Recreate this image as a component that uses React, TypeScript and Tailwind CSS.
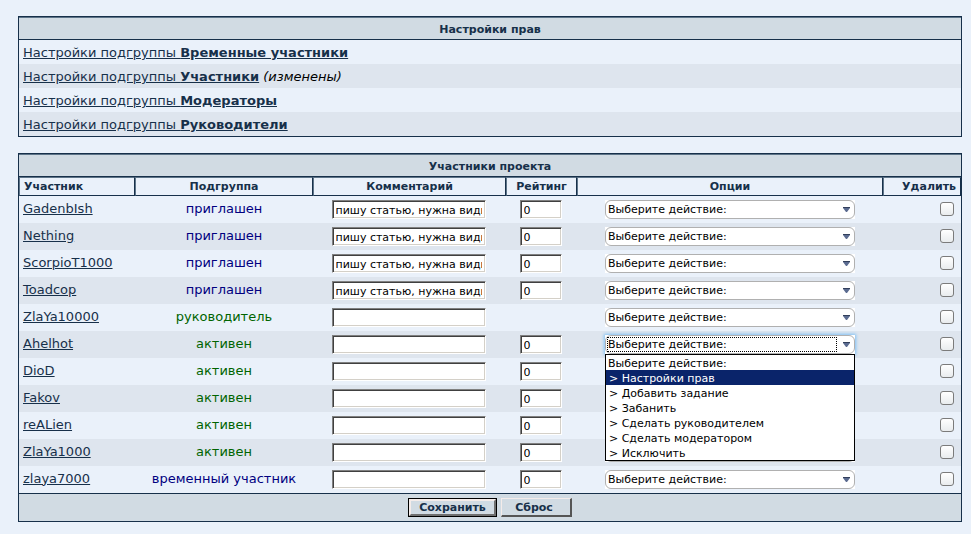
import { useState } from 'react';

interface Member {
  name: string;
  group: string;
  tone: 'blue' | 'green';
  comment: string;
  rating: string | null;
}

const INVITE = 'пишу статью, нужна видимость';

const MEMBERS: Member[] = [
  { name: 'GadenbIsh', group: 'приглашен', tone: 'blue', comment: INVITE, rating: '0' },
  { name: 'Nething', group: 'приглашен', tone: 'blue', comment: INVITE, rating: '0' },
  { name: 'ScorpioT1000', group: 'приглашен', tone: 'blue', comment: INVITE, rating: '0' },
  { name: 'Toadcop', group: 'приглашен', tone: 'blue', comment: INVITE, rating: '0' },
  { name: 'ZlaYa10000', group: 'руководитель', tone: 'green', comment: '', rating: null },
  { name: 'Ahelhot', group: 'активен', tone: 'green', comment: '', rating: '0' },
  { name: 'DioD', group: 'активен', tone: 'green', comment: '', rating: '0' },
  { name: 'Fakov', group: 'активен', tone: 'green', comment: '', rating: '0' },
  { name: 'reALien', group: 'активен', tone: 'green', comment: '', rating: '0' },
  { name: 'ZlaYa1000', group: 'активен', tone: 'green', comment: '', rating: '0' },
  { name: 'zlaya7000', group: 'временный участник', tone: 'blue', comment: '', rating: '0' },
];

const SUBGROUPS = [
  { name: 'Временные участники', changed: false },
  { name: 'Участники', changed: true },
  { name: 'Модераторы', changed: false },
  { name: 'Руководители', changed: false },
];

const ACTIONS = [
  'Выберите действие:',
  '> Настройки прав',
  '> Добавить задание',
  '> Забанить',
  '> Сделать руководителем',
  '> Сделать модератором',
  '> Исключить',
];

const inputClass =
  'mx-auto block h-[19px] border border-t-[#808080] border-l-[#808080] border-r-white border-b-white bg-white pt-0.5 px-[3px] text-[11px] leading-3 text-black shadow-[inset_1px_1px_#404040,inset_-1px_-1px_#d4d0c8] outline-none';

const titleClass =
  'h-[23px] border-t border-b border-t-[#5d7488] border-b-[#17304a] bg-[#d1dbe3] p-0 pt-0.5 text-[11px] leading-4 font-bold';

const headClass =
  'h-[19px] border border-t-[#5d7488] border-l-[#5d7488] border-r-[#17304a] border-b-[#17304a] p-0 px-1 pt-px text-[11px] leading-4 font-bold';

function ActionSelect({ member, open, onToggle, onClose }: {
  member: string;
  open: boolean;
  onToggle: () => void;
  onClose: () => void;
}) {
  const [action, setAction] = useState(0);
  const [hovered, setHovered] = useState(1);

  const pick = (index: number) => {
    setAction(index);
    onClose();
  };

  return (
    <div className={`relative mx-auto h-[19px] w-[250px] bg-white ${open ? 'shadow-[0_0_3px_1px_#7fc1f5]' : ''}`}>
      <select
        aria-label={`Действие: ${member}`}
        value={action}
        onChange={(e) => setAction(Number(e.target.value))}
        onMouseDown={(e) => {
          e.preventDefault();
          onToggle();
        }}
        className="block h-[19px] w-full appearance-none rounded-md border border-[#b0b0b0] bg-white pt-px pl-0.5 pr-5 text-[11px] leading-4 text-black outline-none"
      >
        {ACTIONS.map((label, i) => (
          <option key={label} value={i}>{label}</option>
        ))}
      </select>
      <svg className="pointer-events-none absolute top-[7px] right-[5px] h-[5px] w-[7px]" viewBox="0 0 7 5">
        <path d="M0 0h7v1L4 5H3L0 1z" fill="#5a6b90" />
        <path d="M0 0h7v1H0z" fill="#33405c" />
      </svg>
      {open && (
        <>
          <div className="pointer-events-none absolute inset-y-0.5 left-0.5 right-[18px] border border-dotted border-black" />
          <ul role="listbox" className="absolute top-[19px] left-0 z-10 w-full border border-black bg-white text-left text-[11px] leading-[15px] text-black">
            {ACTIONS.map((label, i) => (
              <li
                key={label}
                role="option"
                aria-selected={i === hovered}
                onMouseEnter={() => setHovered(i)}
                onClick={() => pick(i)}
                className={`h-[15px] pt-px ${i === 0 ? 'pl-0.5' : 'pl-[3px]'} ${i === hovered ? 'bg-[#0a246a] text-white' : ''}`}
              >
                {label}
              </li>
            ))}
          </ul>
        </>
      )}
    </div>
  );
}

function RightsTable() {
  return (
    <table className="w-full border-separate border-spacing-0 border border-[#17304a]">
      <thead>
        <tr>
          <th className={titleClass}>Настройки прав</th>
        </tr>
      </thead>
      <tbody>
        {SUBGROUPS.map((group) => (
          <tr key={group.name} className="even:bg-[#dee5ee]">
            <td className="h-6 p-0 px-1 pt-0.5">
              <a href="#" className="underline">
                Настройки подгруппы <b>{group.name}</b>
              </a>
              {group.changed && <i className="text-black"> (изменены)</i>}
            </td>
          </tr>
        ))}
      </tbody>
    </table>
  );
}

function MembersTable() {
  const [openRow, setOpenRow] = useState<string | null>('Ahelhot');

  return (
    <table className="w-full table-fixed border-separate border-spacing-0 border border-[#17304a]">
      <colgroup>
        <col className="w-[116px]" />
        <col className="w-[178px]" />
        <col className="w-[193px]" />
        <col className="w-[71px]" />
        <col />
        <col className="w-[78px]" />
      </colgroup>
      <thead>
        <tr>
          <th colSpan={6} className={titleClass}>Участники проекта</th>
        </tr>
        <tr>
          <th className={`${headClass} text-left`}>Участник</th>
          <th className={headClass}>Подгруппа</th>
          <th className={headClass}>Комментарий</th>
          <th className={headClass}>Рейтинг</th>
          <th className={headClass}>Опции</th>
          <th className={`${headClass} text-right`}>Удалить</th>
        </tr>
      </thead>
      <tbody>
        {MEMBERS.map((m) => (
          <tr key={m.name} className="even:bg-[#dee5ee]">
            <td className="h-[27px] p-0 pb-0.5 pl-1">
              <a href="#" className="underline">{m.name}</a>
            </td>
            <td className={`p-0 pb-0.5 text-center ${m.tone === 'blue' ? 'text-[#000080]' : 'text-[#006400]'}`}>
              {m.group}
            </td>
            <td className="p-0 pr-0.5">
              <input
                type="text"
                aria-label={`Комментарий: ${m.name}`}
                defaultValue={m.comment}
                className={`${inputClass} w-[154px]`}
              />
            </td>
            <td className="p-0 pr-0.5">
              {m.rating !== null && (
                <input
                  type="text"
                  aria-label={`Рейтинг: ${m.name}`}
                  defaultValue={m.rating}
                  className={`${inputClass} w-[42px]`}
                />
              )}
            </td>
            <td className="p-0">
              <ActionSelect
                member={m.name}
                open={openRow === m.name}
                onToggle={() => setOpenRow(openRow === m.name ? null : m.name)}
                onClose={() => setOpenRow(null)}
              />
            </td>
            <td className="p-0 pr-[7px] pb-0.5">
              <input
                type="checkbox"
                aria-label={`Удалить: ${m.name}`}
                className="ml-auto block size-[14px] appearance-none rounded-[3px] border border-[#7b7b7b] bg-linear-to-b from-white to-[#e9ecee] checked:from-[#4d5f82] checked:to-[#4d5f82]"
              />
            </td>
          </tr>
        ))}
      </tbody>
      <tfoot>
        <tr>
          <td colSpan={6} className="h-7 border-t border-[#17304a] bg-[#d1dbe3] p-0">
            <div className="flex items-center justify-center gap-1">
              <div className="border border-black">
                <button type="submit" className="block h-[17px] w-[87px] border-2 border-t-[#f4ecea] border-l-[#f4ecea] border-r-[#707070] border-b-[#707070] bg-[#d1dbe3] pt-px text-[11px] leading-3 font-bold">
                  Сохранить
                </button>
              </div>
              <button type="reset" className="h-[19px] w-[71px] border-t border-l border-r-2 border-b-2 border-t-[#f4ecea] border-l-[#f4ecea] border-r-[#555555] border-b-[#555555] bg-[#d1dbe3] pt-0.5 pr-1 text-[11px] leading-3 font-bold">
                Сброс
              </button>
            </div>
          </td>
        </tr>
      </tfoot>
    </table>
  );
}

export default function App() {
  return (
    <div className="min-h-screen bg-[#eaf1fa] pt-4 pr-[9px] pb-3 pl-[18px] font-[Verdana,'DejaVu_Sans',sans-serif] text-[13px] leading-4 text-[#17304a]">
      <form className="flex flex-col gap-4" onSubmit={(e) => e.preventDefault()}>
        <RightsTable />
        <MembersTable />
      </form>
    </div>
  );
}
